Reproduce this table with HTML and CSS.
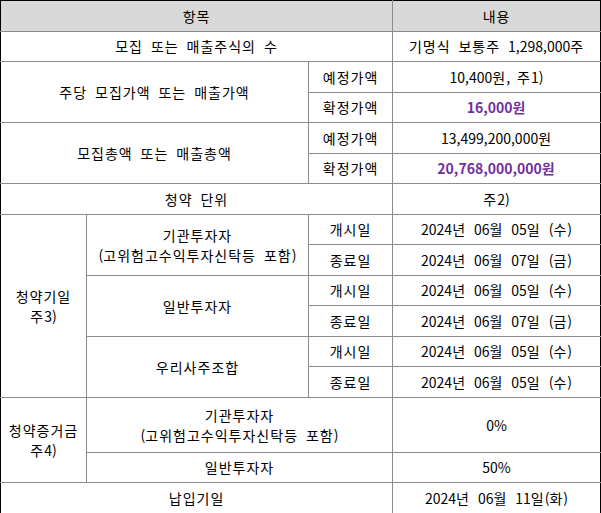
FILE: index.html
```html
<!DOCTYPE html>
<html lang="ko">
<head>
<meta charset="utf-8">
<link rel="stylesheet" href="styles.css">
</head>
<body>
<table class="grid">
  <colgroup>
    <col class="c1"><col class="c2"><col class="c3"><col class="c4">
  </colgroup>
  <tr class="r head">
    <td colspan="3">항목</td>
    <td>내용</td>
  </tr>
  <tr class="r">
    <td colspan="3">모집 또는 매출주식의 수</td>
    <td>기명식 보통주 <span class="d">1,298,000</span>주</td>
  </tr>
  <tr class="r">
    <td colspan="2" rowspan="2">주당 모집가액 또는 매출가액</td>
    <td>예정가액</td>
    <td><span class="d">10,400</span>원<span class="d">, </span>주<span class="d">1)</span></td>
  </tr>
  <tr class="r">
    <td>확정가액</td>
    <td class="hl"><span class="d">16,000</span>원</td>
  </tr>
  <tr class="r">
    <td colspan="2" rowspan="2">모집총액 또는 매출총액</td>
    <td>예정가액</td>
    <td><span class="d">13,499,200,000</span>원</td>
  </tr>
  <tr class="r">
    <td>확정가액</td>
    <td class="hl"><span class="d">20,768,000,000</span>원</td>
  </tr>
  <tr class="r">
    <td colspan="3">청약 단위</td>
    <td>주<span class="d">2)</span></td>
  </tr>
  <tr class="r">
    <td rowspan="6" class="tall">청약기일<br>주<span class="d">3)</span></td>
    <td rowspan="2" class="tall">기관투자자<br><span class="d">(</span>고위험고수익투자신탁등 포함<span class="d">)</span></td>
    <td>개시일</td>
    <td><span class="d">2024</span>년 <span class="d">06</span>월 <span class="d">05</span>일 <span class="d">(</span>수<span class="d">)</span></td>
  </tr>
  <tr class="r">
    <td>종료일</td>
    <td><span class="d">2024</span>년 <span class="d">06</span>월 <span class="d">07</span>일 <span class="d">(</span>금<span class="d">)</span></td>
  </tr>
  <tr class="r">
    <td rowspan="2">일반투자자</td>
    <td>개시일</td>
    <td><span class="d">2024</span>년 <span class="d">06</span>월 <span class="d">05</span>일 <span class="d">(</span>수<span class="d">)</span></td>
  </tr>
  <tr class="r">
    <td>종료일</td>
    <td><span class="d">2024</span>년 <span class="d">06</span>월 <span class="d">07</span>일 <span class="d">(</span>금<span class="d">)</span></td>
  </tr>
  <tr class="r">
    <td rowspan="2">우리사주조합</td>
    <td>개시일</td>
    <td><span class="d">2024</span>년 <span class="d">06</span>월 <span class="d">05</span>일 <span class="d">(</span>수<span class="d">)</span></td>
  </tr>
  <tr class="r">
    <td>종료일</td>
    <td><span class="d">2024</span>년 <span class="d">06</span>월 <span class="d">05</span>일 <span class="d">(</span>수<span class="d">)</span></td>
  </tr>
  <tr class="r2">
    <td rowspan="2" class="tall">청약증거금<br>주<span class="d">4)</span></td>
    <td colspan="2">기관투자자<br><span class="d">(</span>고위험고수익투자신탁등 포함<span class="d">)</span></td>
    <td><span class="d">0%</span></td>
  </tr>
  <tr class="r">
    <td colspan="2">일반투자자</td>
    <td><span class="d">50%</span></td>
  </tr>
  <tr class="r last">
    <td colspan="3">납입기일</td>
    <td><span class="d">2024</span>년 <span class="d">06</span>월 <span class="d">11</span>일<span class="d">(</span>화<span class="d">)</span></td>
  </tr>
</table>
</body>
</html>
```

FILE: styles.css
```css
html, body {
  margin: 0;
  padding: 0;
  background: #ffffff;
}

.grid {
  width: 601px;
  table-layout: fixed;
  border-collapse: collapse;
  border: 1px solid #000000;
  font-family: "Noto Sans CJK KR", "Liberation Sans", sans-serif;
  font-size: 14px;
  color: #000000;
}

.c1 { width: 86px; }
.c2 { width: 222px; }
.c3 { width: 84px; }
.c4 { width: 208px; }

.grid td {
  border: 1px solid #8c8c8c;
  padding: 0;
  text-align: center;
  vertical-align: middle;
  line-height: 20px;
  white-space: nowrap;
  letter-spacing: 1px;
  word-spacing: 3px;
}

.d {
  letter-spacing: 0;
}

.grid tr > td:first-child { border-left: 1px solid #000000; }
.grid tr > td:last-child { border-right: 1px solid #000000; }
.grid tr.head td { border-top: 1px solid #000000; }
.grid tr.last td { border-bottom: 1px solid #000000; }

.r td { height: 29.5px; }
.r2 td { height: 54px; }

.head td { background: #d9d9d9; }

.tall { line-height: 24px; }

.hl {
  color: #7030a0;
  font-weight: bold;
}
```
